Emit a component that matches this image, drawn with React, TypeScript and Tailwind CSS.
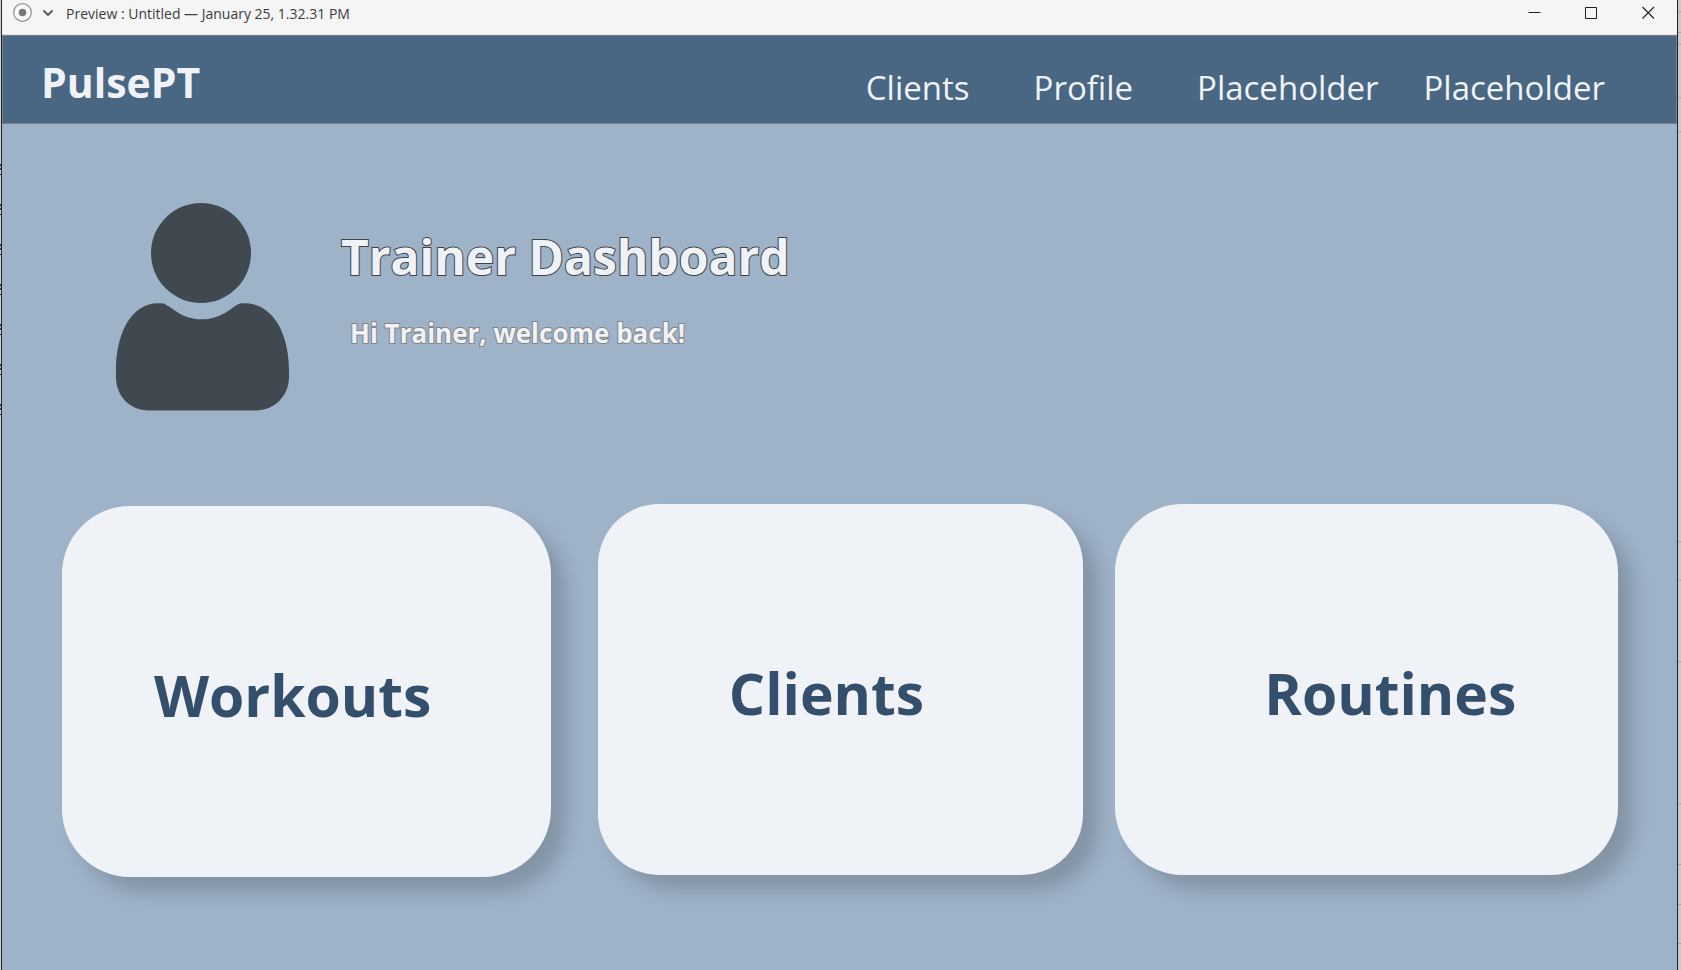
import React from "react";

const navLinks = [
  { label: "Clients", gap: "" },
  { label: "Profile", gap: "ml-16" },
  { label: "Placeholder", gap: "ml-16" },
  { label: "Placeholder", gap: "ml-[45px]" },
];

const cards = [
  { label: "Workouts", shape: "flex-[489] mt-0.5 rounded-[68px]", inset: "pr-7" },
  { label: "Clients", shape: "flex-[484] mb-0.5 ml-[47px] rounded-[61px]", inset: "pr-7" },
  { label: "Routines", shape: "flex-[503] mb-0.5 ml-8 rounded-[68px]", inset: "pl-12" },
];

const rightRows = ["h-3", "h-[21px]", "h-3", "h-[53px]", "h-[34px]", "h-[410px]", "h-[39px]", "h-[81px]", "h-[142px]", "h-[61px]", "h-[40px]", "h-[39px]"];

function TitleBar() {
  return (
    <div className="flex h-[35px] items-start justify-between border-b border-[#e4e4e0] bg-[#f5f5f5]">
      <div className="flex h-[26px] items-center">
        <svg className="ml-[10px]" width="20" height="20" viewBox="0 0 20 20" aria-hidden="true">
          <circle cx="10.5" cy="9.5" r="8.8" fill="#fafafa" stroke="#919191" strokeWidth="1.2" />
          <circle cx="10.5" cy="9.5" r="3.8" fill="#777" />
        </svg>
        <button type="button" aria-label="Preview options" className="ml-2 flex h-5 w-4 items-center justify-center">
          <svg width="12" height="8" viewBox="0 0 12 8" fill="none" stroke="#555" strokeWidth="1.8">
            <path d="M1.5 1.5 6 6l4.5-4.5" />
          </svg>
        </button>
        <span className="ml-[10px] pt-px text-[14px] leading-5 whitespace-nowrap text-[#3c3c3c]">
          Preview : Untitled — January 25, 1.32.31 PM
        </span>
      </div>
      <div className="flex h-[25px]">
        <button type="button" aria-label="Minimize" className="flex w-[57px] items-center justify-center">
          <svg width="13" height="13" viewBox="0 0 13 13" stroke="#222"><path d="M.5 6.5h12" /></svg>
        </button>
        <button type="button" aria-label="Maximize" className="flex w-[57px] items-center justify-center">
          <svg width="13" height="13" viewBox="0 0 13 13" fill="none" stroke="#222"><path d="M.5 1.5h11v11H.5z" /></svg>
        </button>
        <button type="button" aria-label="Close" className="flex w-[57px] items-center justify-center">
          <svg width="13" height="13" viewBox="0 0 13 13" stroke="#222" strokeWidth="1.1"><path d="M.5 1l11.5 11.5M12 1L.5 12.5" /></svg>
        </button>
      </div>
    </div>
  );
}

function Avatar() {
  return (
    <svg className="shrink-0" width="174" height="208" viewBox="0 0 174 208" fill="#404850" aria-hidden="true">
      <circle cx="85" cy="50" r="50" />
      <path d="M47 100.5C56 103 64 116.3 86 116.3 107 116.3 117 102.5 124 100.5 156 97 173 130 173 167V174C173 193 158 207.5 140 207.5H33C14 207.5 0 193 0 174V167C0 128 17 97 47 100.5Z" />
    </svg>
  );
}

export default function App() {
  return (
    <div className="flex min-h-screen bg-[#c9c9c9] font-['Open_Sans','Noto_Sans',sans-serif]">
      <div className="w-px shrink-0 bg-[#cfd0cc] pt-[164px]">
        <div className="h-[252px] bg-[repeating-linear-gradient(#333_0_2px,#aaa_2px_4px,#444_4px_6px,#cfd0cc_6px_10px,#222_10px_11px,#cfd0cc_11px_40px)]" />
      </div>
      <div className="flex min-w-0 flex-1 flex-col border-x border-[#20262e] bg-[#9eb2c8]">
        <TitleBar />
        <header className="flex h-[89px] items-center justify-between border border-[#77818b] bg-[#496682] pr-[71px] pl-[38px] text-[#eff3f8]">
          <a href="#home" className="pt-1 text-[41px] leading-[56px] font-bold">PulsePT</a>
          <nav className="flex pt-4 text-[33px] leading-[44px]">
            {navLinks.map((link, i) => (
              <a key={i} href={"#" + link.label.toLowerCase()} className={link.gap}>{link.label}</a>
            ))}
          </nav>
        </header>
        <main className="flex flex-col pt-[79px] pr-[59px] pb-20 pl-[60px]">
          <section className="flex items-start pl-[54px]">
            <Avatar />
            <div className="pt-[21px] pl-[51px] text-[#eff3f8]">
              <h1 className="text-[48px] leading-[66px] font-bold [-webkit-text-stroke:2px_#3c4248] [paint-order:stroke_fill]">Trainer Dashboard</h1>
              <p className="mt-[25px] pl-[9px] text-[26px] leading-9 font-bold [-webkit-text-stroke:2px_#858585] [paint-order:stroke_fill]">Hi Trainer, welcome back!</p>
            </div>
          </section>
          <section className="mt-[93px] flex">
            {cards.map((card) => (
              <button
                key={card.label}
                type="button"
                className={"flex h-[371px] min-w-0 flex-col items-center justify-center bg-[#eff3f8] text-[57px] leading-[78px] font-bold text-[#344f6b] shadow-[15px_15px_18px_rgba(0,0,0,0.17)] " + card.shape}
              >
                <span className={"pt-[6px] " + card.inset}>{card.label}</span>
              </button>
            ))}
          </section>
        </main>
      </div>
      <div className="w-[3px] shrink-0">
        {rightRows.map((height, i) => (
          <div key={i} className={"border-b border-[#a9a9a9] " + height} />
        ))}
      </div>
    </div>
  );
}
